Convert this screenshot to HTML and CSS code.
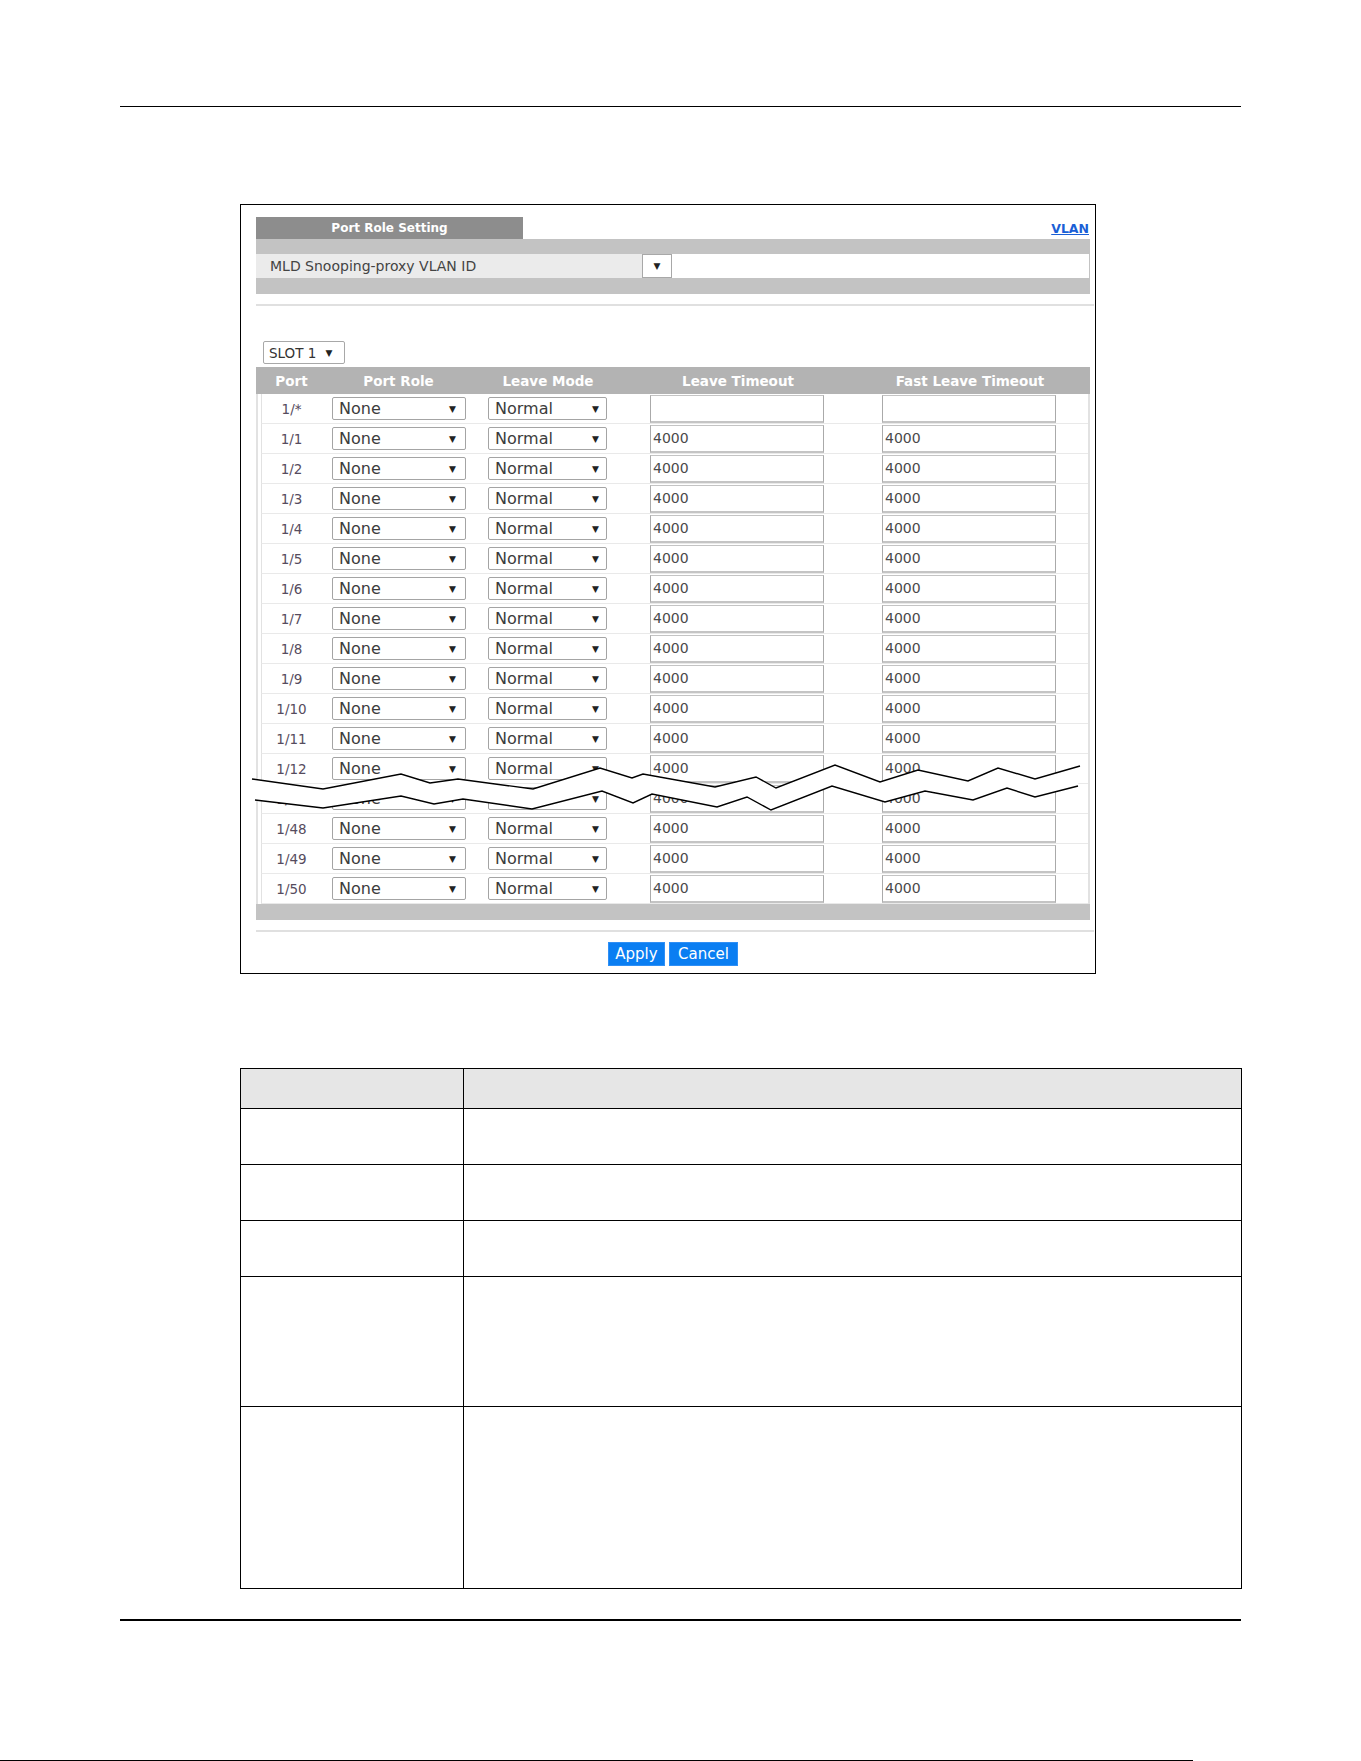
FILE: index.html
```html
<!DOCTYPE html>
<html lang="en">
<head>
    <meta charset="UTF-8">
    <meta name="viewport" content="width=device-width, initial-scale=1.0">
    <title>MLD Snooping-proxy Port Role Setting</title>
    <link rel="stylesheet" href="styles.css">
</head>
<body>
    <div class="top-rule"></div>

    <div class="figure">
        <div class="tab-row">
            <div class="tab">Port Role Setting</div>
            <a href="#" class="vlan-link">VLAN</a>
        </div>

        <div class="vlan-box">
            <div class="vlan-row">
                <div class="vlan-label">MLD Snooping-proxy VLAN ID</div>
                <div class="vlan-select">&#9660;</div>
                <div class="vlan-fill"></div>
            </div>
        </div>

        <div class="divider"></div>

        <div class="slot-select">SLOT 1 <span class="arrow">&#9660;</span></div>

        <div class="port-head">
            <div>Port</div>
            <div>Port Role</div>
            <div>Leave Mode</div>
            <div>Leave Timeout</div>
            <div>Fast Leave Timeout</div>
        </div>

        <div class="port-body">
            <div class="port-row">
                <div class="port-no">1/*</div>
                <div><span class="sel role">None<i>&#9660;</i></span></div>
                <div><span class="sel mode">Normal<i>&#9660;</i></span></div>
                <div><input type="text" class="num" value=""></div>
                <div><input type="text" class="num fast" value=""></div>
            </div>
            <div class="port-row">
                <div class="port-no">1/1</div>
                <div><span class="sel role">None<i>&#9660;</i></span></div>
                <div><span class="sel mode">Normal<i>&#9660;</i></span></div>
                <div><input type="text" class="num" value="4000"></div>
                <div><input type="text" class="num fast" value="4000"></div>
            </div>
            <div class="port-row">
                <div class="port-no">1/2</div>
                <div><span class="sel role">None<i>&#9660;</i></span></div>
                <div><span class="sel mode">Normal<i>&#9660;</i></span></div>
                <div><input type="text" class="num" value="4000"></div>
                <div><input type="text" class="num fast" value="4000"></div>
            </div>
            <div class="port-row">
                <div class="port-no">1/3</div>
                <div><span class="sel role">None<i>&#9660;</i></span></div>
                <div><span class="sel mode">Normal<i>&#9660;</i></span></div>
                <div><input type="text" class="num" value="4000"></div>
                <div><input type="text" class="num fast" value="4000"></div>
            </div>
            <div class="port-row">
                <div class="port-no">1/4</div>
                <div><span class="sel role">None<i>&#9660;</i></span></div>
                <div><span class="sel mode">Normal<i>&#9660;</i></span></div>
                <div><input type="text" class="num" value="4000"></div>
                <div><input type="text" class="num fast" value="4000"></div>
            </div>
            <div class="port-row">
                <div class="port-no">1/5</div>
                <div><span class="sel role">None<i>&#9660;</i></span></div>
                <div><span class="sel mode">Normal<i>&#9660;</i></span></div>
                <div><input type="text" class="num" value="4000"></div>
                <div><input type="text" class="num fast" value="4000"></div>
            </div>
            <div class="port-row">
                <div class="port-no">1/6</div>
                <div><span class="sel role">None<i>&#9660;</i></span></div>
                <div><span class="sel mode">Normal<i>&#9660;</i></span></div>
                <div><input type="text" class="num" value="4000"></div>
                <div><input type="text" class="num fast" value="4000"></div>
            </div>
            <div class="port-row">
                <div class="port-no">1/7</div>
                <div><span class="sel role">None<i>&#9660;</i></span></div>
                <div><span class="sel mode">Normal<i>&#9660;</i></span></div>
                <div><input type="text" class="num" value="4000"></div>
                <div><input type="text" class="num fast" value="4000"></div>
            </div>
            <div class="port-row">
                <div class="port-no">1/8</div>
                <div><span class="sel role">None<i>&#9660;</i></span></div>
                <div><span class="sel mode">Normal<i>&#9660;</i></span></div>
                <div><input type="text" class="num" value="4000"></div>
                <div><input type="text" class="num fast" value="4000"></div>
            </div>
            <div class="port-row">
                <div class="port-no">1/9</div>
                <div><span class="sel role">None<i>&#9660;</i></span></div>
                <div><span class="sel mode">Normal<i>&#9660;</i></span></div>
                <div><input type="text" class="num" value="4000"></div>
                <div><input type="text" class="num fast" value="4000"></div>
            </div>
            <div class="port-row">
                <div class="port-no">1/10</div>
                <div><span class="sel role">None<i>&#9660;</i></span></div>
                <div><span class="sel mode">Normal<i>&#9660;</i></span></div>
                <div><input type="text" class="num" value="4000"></div>
                <div><input type="text" class="num fast" value="4000"></div>
            </div>
            <div class="port-row">
                <div class="port-no">1/11</div>
                <div><span class="sel role">None<i>&#9660;</i></span></div>
                <div><span class="sel mode">Normal<i>&#9660;</i></span></div>
                <div><input type="text" class="num" value="4000"></div>
                <div><input type="text" class="num fast" value="4000"></div>
            </div>
            <div class="port-row">
                <div class="port-no">1/12</div>
                <div><span class="sel role">None<i>&#9660;</i></span></div>
                <div><span class="sel mode">Normal<i>&#9660;</i></span></div>
                <div><input type="text" class="num" value="4000"></div>
                <div><input type="text" class="num fast" value="4000"></div>
            </div>
            <div class="port-row">
                <div class="port-no">1/47</div>
                <div><span class="sel role">None<i>&#9660;</i></span></div>
                <div><span class="sel mode">Normal<i>&#9660;</i></span></div>
                <div><input type="text" class="num" value="4000"></div>
                <div><input type="text" class="num fast" value="4000"></div>
            </div>
            <div class="port-row">
                <div class="port-no">1/48</div>
                <div><span class="sel role">None<i>&#9660;</i></span></div>
                <div><span class="sel mode">Normal<i>&#9660;</i></span></div>
                <div><input type="text" class="num" value="4000"></div>
                <div><input type="text" class="num fast" value="4000"></div>
            </div>
            <div class="port-row">
                <div class="port-no">1/49</div>
                <div><span class="sel role">None<i>&#9660;</i></span></div>
                <div><span class="sel mode">Normal<i>&#9660;</i></span></div>
                <div><input type="text" class="num" value="4000"></div>
                <div><input type="text" class="num fast" value="4000"></div>
            </div>
            <div class="port-row">
                <div class="port-no">1/50</div>
                <div><span class="sel role">None<i>&#9660;</i></span></div>
                <div><span class="sel mode">Normal<i>&#9660;</i></span></div>
                <div><input type="text" class="num" value="4000"></div>
                <div><input type="text" class="num fast" value="4000"></div>
            </div>
        </div>

        <div class="table-foot"></div>
        <div class="divider divider-bottom"></div>

        <div class="buttons">
            <button type="button" class="btn btn-apply">Apply</button>
            <button type="button" class="btn btn-cancel">Cancel</button>
        </div>

        <!-- torn-page break between port 1/12 and 1/48 -->
        <svg class="break" width="840" height="60" viewBox="0 0 840 60">
            <polygon fill="#ffffff" points="2,19 73,29 151,14 180,23 208,19 283,29 350,8 382,18 393,14 465,27 506,17 526,28 585,5 630,22 668,10 718,21 748,8 785,19 830,6 828,26 785,37 757,28 723,40 675,31 635,42 582,26 521,50 497,37 467,47 402,34 383,43 352,31 282,49 213,39 184,44 151,36 73,48 5,40"/>
            <polyline fill="none" stroke="#000" stroke-width="1.4" points="2,19 73,29 151,14 180,23 208,19 283,29 350,8 382,18 393,14 465,27 506,17 526,28 585,5 630,22 668,10 718,21 748,8 785,19 830,6"/>
            <polyline fill="none" stroke="#000" stroke-width="1.4" points="5,40 73,48 151,36 184,44 213,39 282,49 352,31 383,43 402,34 467,47 497,37 521,50 582,26 635,42 675,31 723,40 757,28 785,37 828,26"/>
        </svg>
    </div>

    <div class="desc-table">
        <div class="desc-head"></div>
        <div class="desc-head"></div>
        <div></div><div></div>
        <div></div><div></div>
        <div></div><div></div>
        <div></div><div></div>
        <div></div><div></div>
    </div>

    <div class="bottom-rule"></div>
    <div class="edge-line"></div>
</body>
</html>
```

FILE: styles.css
```css
/* Page */
body {
    margin: 0;
    background: #ffffff;
    font-family: "DejaVu Sans", Verdana, sans-serif;
    color: #333;
}

.top-rule {
    margin: 106px 120px 0;
    height: 1px;
    background: #000;
}

/* Screenshot frame */
.figure {
    position: relative;
    width: 856px;
    box-sizing: border-box;
    margin: 97px 0 0 240px;
    padding: 12px 5px 7px 15px;
    border: 1px solid #000;
    background: #fff;
}

.tab-row {
    display: flex;
    justify-content: space-between;
    align-items: center;
    height: 22px;
}

.tab {
    width: 267px;
    height: 22px;
    line-height: 22px;
    background: #8d8d8d;
    color: #fff;
    font-size: 12px;
    font-weight: bold;
    text-align: center;
}

.vlan-link {
    color: #1a5fd6;
    font-size: 12.5px;
    font-weight: bold;
    text-decoration: underline;
    margin-right: 1px;
}

/* VLAN ID block */
.vlan-box {
    background: #c3c3c3;
    padding: 15px 0 16px;
}

.vlan-row {
    display: flex;
    height: 24px;
}

.vlan-label {
    width: 386px;
    box-sizing: border-box;
    padding-left: 14px;
    background: #ebebeb;
    color: #444;
    font-size: 14px;
    line-height: 24px;
}

.vlan-select {
    width: 30px;
    box-sizing: border-box;
    border: 1px solid #a8a8a8;
    background: #fff;
    font-size: 9px;
    line-height: 22px;
    text-align: center;
    color: #222;
}

.vlan-fill {
    flex: 1;
    background: #fff;
    margin-right: 1px;
}

.divider {
    height: 2px;
    background: #e0e0e0;
    margin: 10px -4px 0 0;
}

/* Slot select */
.slot-select {
    display: flex;
    align-items: center;
    width: 82px;
    height: 23px;
    box-sizing: border-box;
    margin: 35px 0 0 7px;
    padding-left: 5px;
    border: 1px solid #a8a8a8;
    border-radius: 2px;
    font-size: 13.5px;
    color: #333;
}

.slot-select .arrow {
    font-size: 9px;
    margin-left: 9px;
    color: #222;
}

/* Port table */
.port-head {
    display: grid;
    grid-template-columns: 71px 143px 156px 224px 1fr;
    align-items: center;
    height: 27px;
    margin-top: 3px;
    background: #b3b3b3;
    color: #fff;
    font-size: 13.5px;
    font-weight: bold;
    text-align: center;
}

.port-body {
    border-left: 2px solid #e2e2e2;
    border-right: 2px solid #e2e2e2;
}

.port-row {
    display: grid;
    grid-template-columns: 65px 143px 156px 224px 1fr;
    align-items: center;
    height: 30px;
    box-sizing: border-box;
    margin-left: 3px;
    border-left: 1px solid #e2e2e2;
    border-bottom: 1px solid #e9e9e9;
}

.port-no {
    padding-right: 6px;
    text-align: center;
    font-size: 13.5px;
    color: #564c5e;
}

.sel {
    display: flex;
    justify-content: space-between;
    align-items: center;
    height: 23px;
    box-sizing: border-box;
    padding: 0 9px 0 6px;
    border: 1px solid #a4a4a4;
    border-radius: 2px;
    background: #fff;
    font-size: 16px;
    color: #3c3c3c;
}

.sel i {
    font-style: normal;
    font-size: 9px;
    color: #222;
}

.sel.role {
    width: 134px;
    margin-left: 5px;
}

.sel.mode {
    width: 119px;
    margin-left: 18px;
    padding-right: 7px;
}

.num {
    display: block;
    width: 174px;
    height: 28px;
    box-sizing: border-box;
    margin: 0 0 0 24px;
    padding: 0 2px;
    border: 1px solid #aaaaaa;
    border-top-color: #c4c4c4;
    border-bottom: 2px solid #c4c4c4;
    background: #fff;
    font-family: "DejaVu Sans", Verdana, sans-serif;
    font-size: 14px;
    color: #4a4a4a;
    outline: none;
}

.num.fast {
    margin-left: 32px;
}

.table-foot {
    height: 16px;
    background: #c3c3c3;
}

.divider-bottom {
    margin-top: 10px;
}

.buttons {
    display: flex;
    justify-content: center;
    gap: 4px;
    margin-top: 10px;
}

.btn {
    height: 24px;
    padding: 0;
    border: 1px solid #2f8ff5;
    background: #0a7ef2;
    color: #fff;
    font-family: "DejaVu Sans", Verdana, sans-serif;
    font-size: 15px;
    cursor: pointer;
}

.btn-apply {
    width: 57px;
}

.btn-cancel {
    width: 69px;
}

.break {
    position: absolute;
    left: 9px;
    top: 555px;
}

/* Description table */
.desc-table {
    display: grid;
    grid-template-columns: 222px 1fr;
    grid-template-rows: 39px 55px 55px 55px 129px 181px;
    gap: 1px;
    width: 1002px;
    box-sizing: border-box;
    margin: 94px 0 0 240px;
    padding: 1px;
    background: #000;
}

.desc-table div {
    background: #fff;
}

.desc-table .desc-head {
    background: #e6e6e6;
}

.bottom-rule {
    margin: 30px 120px 0;
    height: 2px;
    background: #000;
}

.edge-line {
    width: 1193px;
    height: 1px;
    margin-top: 139px;
    background: #000;
}
```
